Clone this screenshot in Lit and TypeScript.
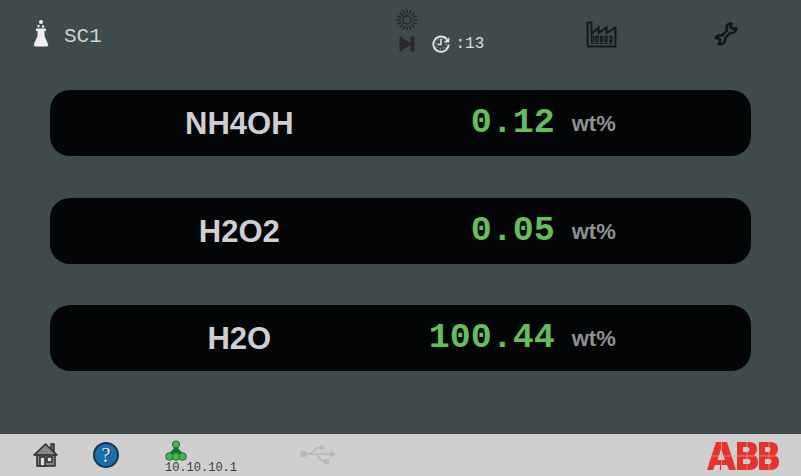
import { LitElement, html, css, svg } from "lit";
import { customElement, property, state } from "lit/decorators.js";

interface Reading {
  name: string;
  value: string;
  unit: string;
}

const flaskIcon = html`<svg width="18" height="30" viewBox="0 0 18 30" aria-hidden="true">
  <g fill="#f2eff2">
    <circle cx="9" cy="3" r="2" />
    <circle cx="6.500" cy="7" r="1.200" />
    <circle cx="11" cy="7.500" r="1.200" />
    <path d="M4 9.500h10v2.500h-1.500v5L16 25q1 2.500-2 2.500H4q-3 0-2-2.500l3.500-8v-5H4z" />
  </g>
</svg>`;

const sunIcon = html`<svg width="22" height="22" viewBox="0 0 22 22" aria-hidden="true">
  <g stroke="#24282a" stroke-width="1.5" fill="none">
    <circle cx="11" cy="11" r="4.2" />
    ${Array.from({ length: 16 }, (_, i) => svg`<path d="M11 4.600V.6" transform="rotate(${i * 22.5} 11 11)" />`)}
  </g>
</svg>`;

const skipIcon = html`<svg width="18" height="16" viewBox="0 0 18 16" aria-hidden="true">
  <path d="M2 1l11 7-11 7zM13 1h3v14h-3z" fill="#2b2a2b" stroke="#2b2a2b" />
</svg>`;

const clockIcon = html`<svg width="18" height="18" viewBox="0 0 18 18" aria-hidden="true">
  <g fill="none" stroke="#dedede">
    <path d="M15 4.500A7.600 7.600 0 1 0 16.600 9.500" stroke-width="2" />
    <path d="M9 4v5.500H5.500" stroke-width="1.6" />
    <circle cx="9" cy="9" r="5" stroke-width="1" stroke-dasharray="1 2.920" />
  </g>
  <path d="M17.300 2v5.500h-5.500z" fill="#dedede" />
</svg>`;

const factoryIcon = html`<svg width="31" height="27" viewBox="0 0 31 27" aria-hidden="true">
  <g fill="none" stroke="#14181a">
    <path d="M1.500 25.500V1.500h4V13l7-6.500V12l8-5.500V12l9-5.500v19z" stroke-width="2" />
    <path d="M5.500 15.500v5h2v-5zM10 15.500v5h2v-5zM14.500 15.500v5h2v-5zM19 15.500v5h2v-5zM24 15.500v5h2v-5z" stroke-width="1.300" />
    <path d="M5 22.500h22" stroke-width="1" stroke-dasharray="3 1.500" />
  </g>
</svg>`;

const wrenchIcon = html`<svg width="24" height="24" viewBox="0 0 24 24" aria-hidden="true">
  <path
    d="M17.500 1.500q-4.500 0-5 4 0 1.500.5 3l-5 5q-4.500-1-6.500 2.500l3.500.5 1.500 2-2 3.500q5.500 1 6.500-3 .5-1.500 0-3l5-5q5 1 6.500-4.500l-3.500.5-2.500-2z"
    fill="none" stroke="#111516" stroke-width="2.400" stroke-linejoin="round" />
</svg>`;

const homeIcon = html`<svg width="26" height="26" viewBox="0 0 26 26" aria-hidden="true">
  <g stroke="#2b2b2b" stroke-width="1.5" stroke-linejoin="round">
    <path d="M18 2h3v8h-3z" fill="#777" />
    <path d="M4 13v11h18V13l-9-9z" fill="#858585" />
    <path d="M1 13L12.500 2 24 13z" fill="#858585" />
    <path d="M7 15h5v9H7z" fill="#dedede" />
    <path d="M14 15h5v5h-5z" fill="#dedede" />
  </g>
</svg>`;

const networkIcon = html`<svg width="22" height="21" viewBox="0 0 22 21" aria-hidden="true">
  <path d="M11 5v10M11 8l-6 7M11 8l6 7" stroke="#1d7130" stroke-width="3" fill="none" />
  <g fill="#43b649" stroke="#1d7130" stroke-width="1">
    <circle cx="11" cy="4.500" r="3.600" />
    <circle cx="4.500" cy="16.500" r="3.800" />
    <circle cx="17.500" cy="16.500" r="3.800" />
    <circle cx="11" cy="16.500" r="3.800" />
  </g>
</svg>`;

const usbIcon = html`<svg width="38" height="20" viewBox="0 0 38 20" aria-hidden="true">
  <g fill="none" stroke="#b8b8b8" stroke-width="1.600">
    <path d="M4 9h28M9 9q4 0 6-3t6-3.500h2M14 9q4 0 6 3.500t5 4h1" />
  </g>
  <g fill="#b8b8b8">
    <circle cx="4.500" cy="9" r="3.200" />
    <circle cx="23" cy="2.600" r="2.400" />
    <path d="M25 14h5v5h-5zM31 5.500l6 3.500-6 3.500z" />
  </g>
</svg>`;

const abbLogo = html`<svg width="72" height="30" viewBox="0 0 72 30" role="img" aria-label="ABB">
  <g fill="#e0342c">
    <path d="M9 1h5v28h-1v-5H8l-2 5H0zM14 1h6l9 28h-7l-2-5h-6z" />
    <path d="M30 1h12q8 0 8 7 0 4-3 6 4 2 4 7 0 8-9 8H30z" />
    <path d="M52 1h11q8 0 8 7 0 4-3 6 4 2 4 7 0 8-9 8H52z" />
  </g>
  <g fill="#cfcfcf">
    <path d="M14 8l4 11h-7.500zM36 6h5q3 2.500 0 5h-5zM36 18h6q3 2.500 0 5h-6zM58 6h4q3 2.500 0 5h-4zM58 18h5q3 2.500 0 5h-5z" />
  </g>
  <path d="M0 15h72M14.500 0v30M40 0v30M62 0v30" fill="none" stroke="#e8a5a0" stroke-width=".7" />
  <path d="M0 14h3l-3 12z" fill="#cfcfcf" />
</svg>`;

@customElement("reading-bar")
export class ReadingBar extends LitElement {
  @property() name = "";
  @property() value = "";
  @property() unit = "";

  static styles = css`
    :host {
      display: grid;
      grid-template-columns: 54% 18% 1fr;
      align-items: center;
      height: 66px;
      border-radius: 20px;
      background: #030506;
      white-space: nowrap;
    }
    .name {
      padding-top: 2px;
      text-align: center;
      font: bold 31px/36px "Liberation Sans", Arial, sans-serif;
      color: #cfcfd1;
    }
    .value {
      text-align: right;
      font: bold 35px/36px "Liberation Mono", "Courier New", monospace;
      color: #65bd5c;
    }
    .unit {
      padding-top: 2px;
      padding-left: 17px;
      font: bold 22px/36px "Liberation Sans", Arial, sans-serif;
      color: #909092;
    }
  `;

  render() {
    return html`
      <span class="name">${this.name}</span>
      <span class="value">${this.value}</span>
      <span class="unit">${this.unit}</span>
    `;
  }
}

@customElement("app-root")
export class AppRoot extends LitElement {
  @state() private readings: Reading[] = [
    { name: "NH4OH", value: "0.12", unit: "wt%" },
    { name: "H2O2", value: "0.05", unit: "wt%" },
    { name: "H2O", value: "100.44", unit: "wt%" },
  ];

  static styles = css`
    :host {
      display: flex;
      flex-direction: column;
      min-height: 100vh;
      background: #3f4a4d;
      font-family: "Liberation Mono", "Courier New", monospace;
    }
    svg {
      display: block;
    }
    button {
      display: block;
      padding: 0;
      border: 0;
      background: none;
      font: inherit;
      color: inherit;
      cursor: pointer;
    }
    header {
      display: grid;
      grid-template-columns: 49% 24% 16% 1fr;
      align-items: center;
      height: 72px;
    }
    .stream {
      display: flex;
      align-items: end;
      gap: 14px;
      padding-left: 32px;
      padding-bottom: 4px;
      font-size: 21px;
      line-height: 24px;
      color: #d2d2d2;
    }
    .status {
      display: grid;
      grid-template-columns: 32px auto;
      justify-content: start;
      align-items: center;
      column-gap: 8px;
      row-gap: 4px;
      padding-left: 4px;
      padding-bottom: 10px;
    }
    .status button {
      padding-left: 2px;
    }
    .sun {
      grid-column: 1 / -1;
    }
    .timer {
      display: flex;
      align-items: center;
      margin-left: -4px;
      gap: 5px;
      font-size: 16px;
      line-height: 18px;
      color: #dedede;
    }
    .tool {
      padding-left: 1px;
      padding-bottom: 4px;
    }
    main {
      flex: 1;
      display: flex;
      flex-direction: column;
      justify-content: space-between;
      padding: 18px 50px 63px;
    }
    footer {
      display: flex;
      align-items: center;
      height: 42px;
      padding: 0 22px 0 33px;
      background: #cfcfcf;
    }
    .help {
      width: 26px;
      height: 26px;
      margin-left: 34px;
      box-sizing: border-box;
      border: 2px solid #17364c;
      border-radius: 50%;
      background: #1b6fae;
      color: #e4edf3;
      font: 20px/22px "Liberation Serif", "Times New Roman", serif;
      text-shadow: 1px 1px 0 #17364c;
    }
    .network {
      margin-left: 46px;
      padding-top: 4px;
      font-size: 12px;
      line-height: 14px;
      color: #3c3c3c;
    }
    .usb {
      margin-left: 62px;
    }
    .logo {
      margin-left: auto;
      padding-top: 2px;
    }
  `;

  render() {
    return html`
      <header>
        <div class="stream">${flaskIcon}<span>SC1</span></div>
        <div class="status">
          <span class="sun">${sunIcon}</span>
          <button aria-label="Next">${skipIcon}</button>
          <div class="timer">${clockIcon}<span>:13</span></div>
        </div>
        <div class="tool"><button aria-label="Plant">${factoryIcon}</button></div>
        <div class="tool"><button aria-label="Settings">${wrenchIcon}</button></div>
      </header>
      <main>
        ${this.readings.map(
          (r) => html`<reading-bar .name=${r.name} .value=${r.value} .unit=${r.unit}></reading-bar>`
        )}
      </main>
      <footer>
        <button aria-label="Home">${homeIcon}</button>
        <button class="help" aria-label="Help">?</button>
        <div class="network">${networkIcon}<span>10.10.10.1</span></div>
        <div class="usb">${usbIcon}</div>
        <div class="logo">${abbLogo}</div>
      </footer>
    `;
  }
}
